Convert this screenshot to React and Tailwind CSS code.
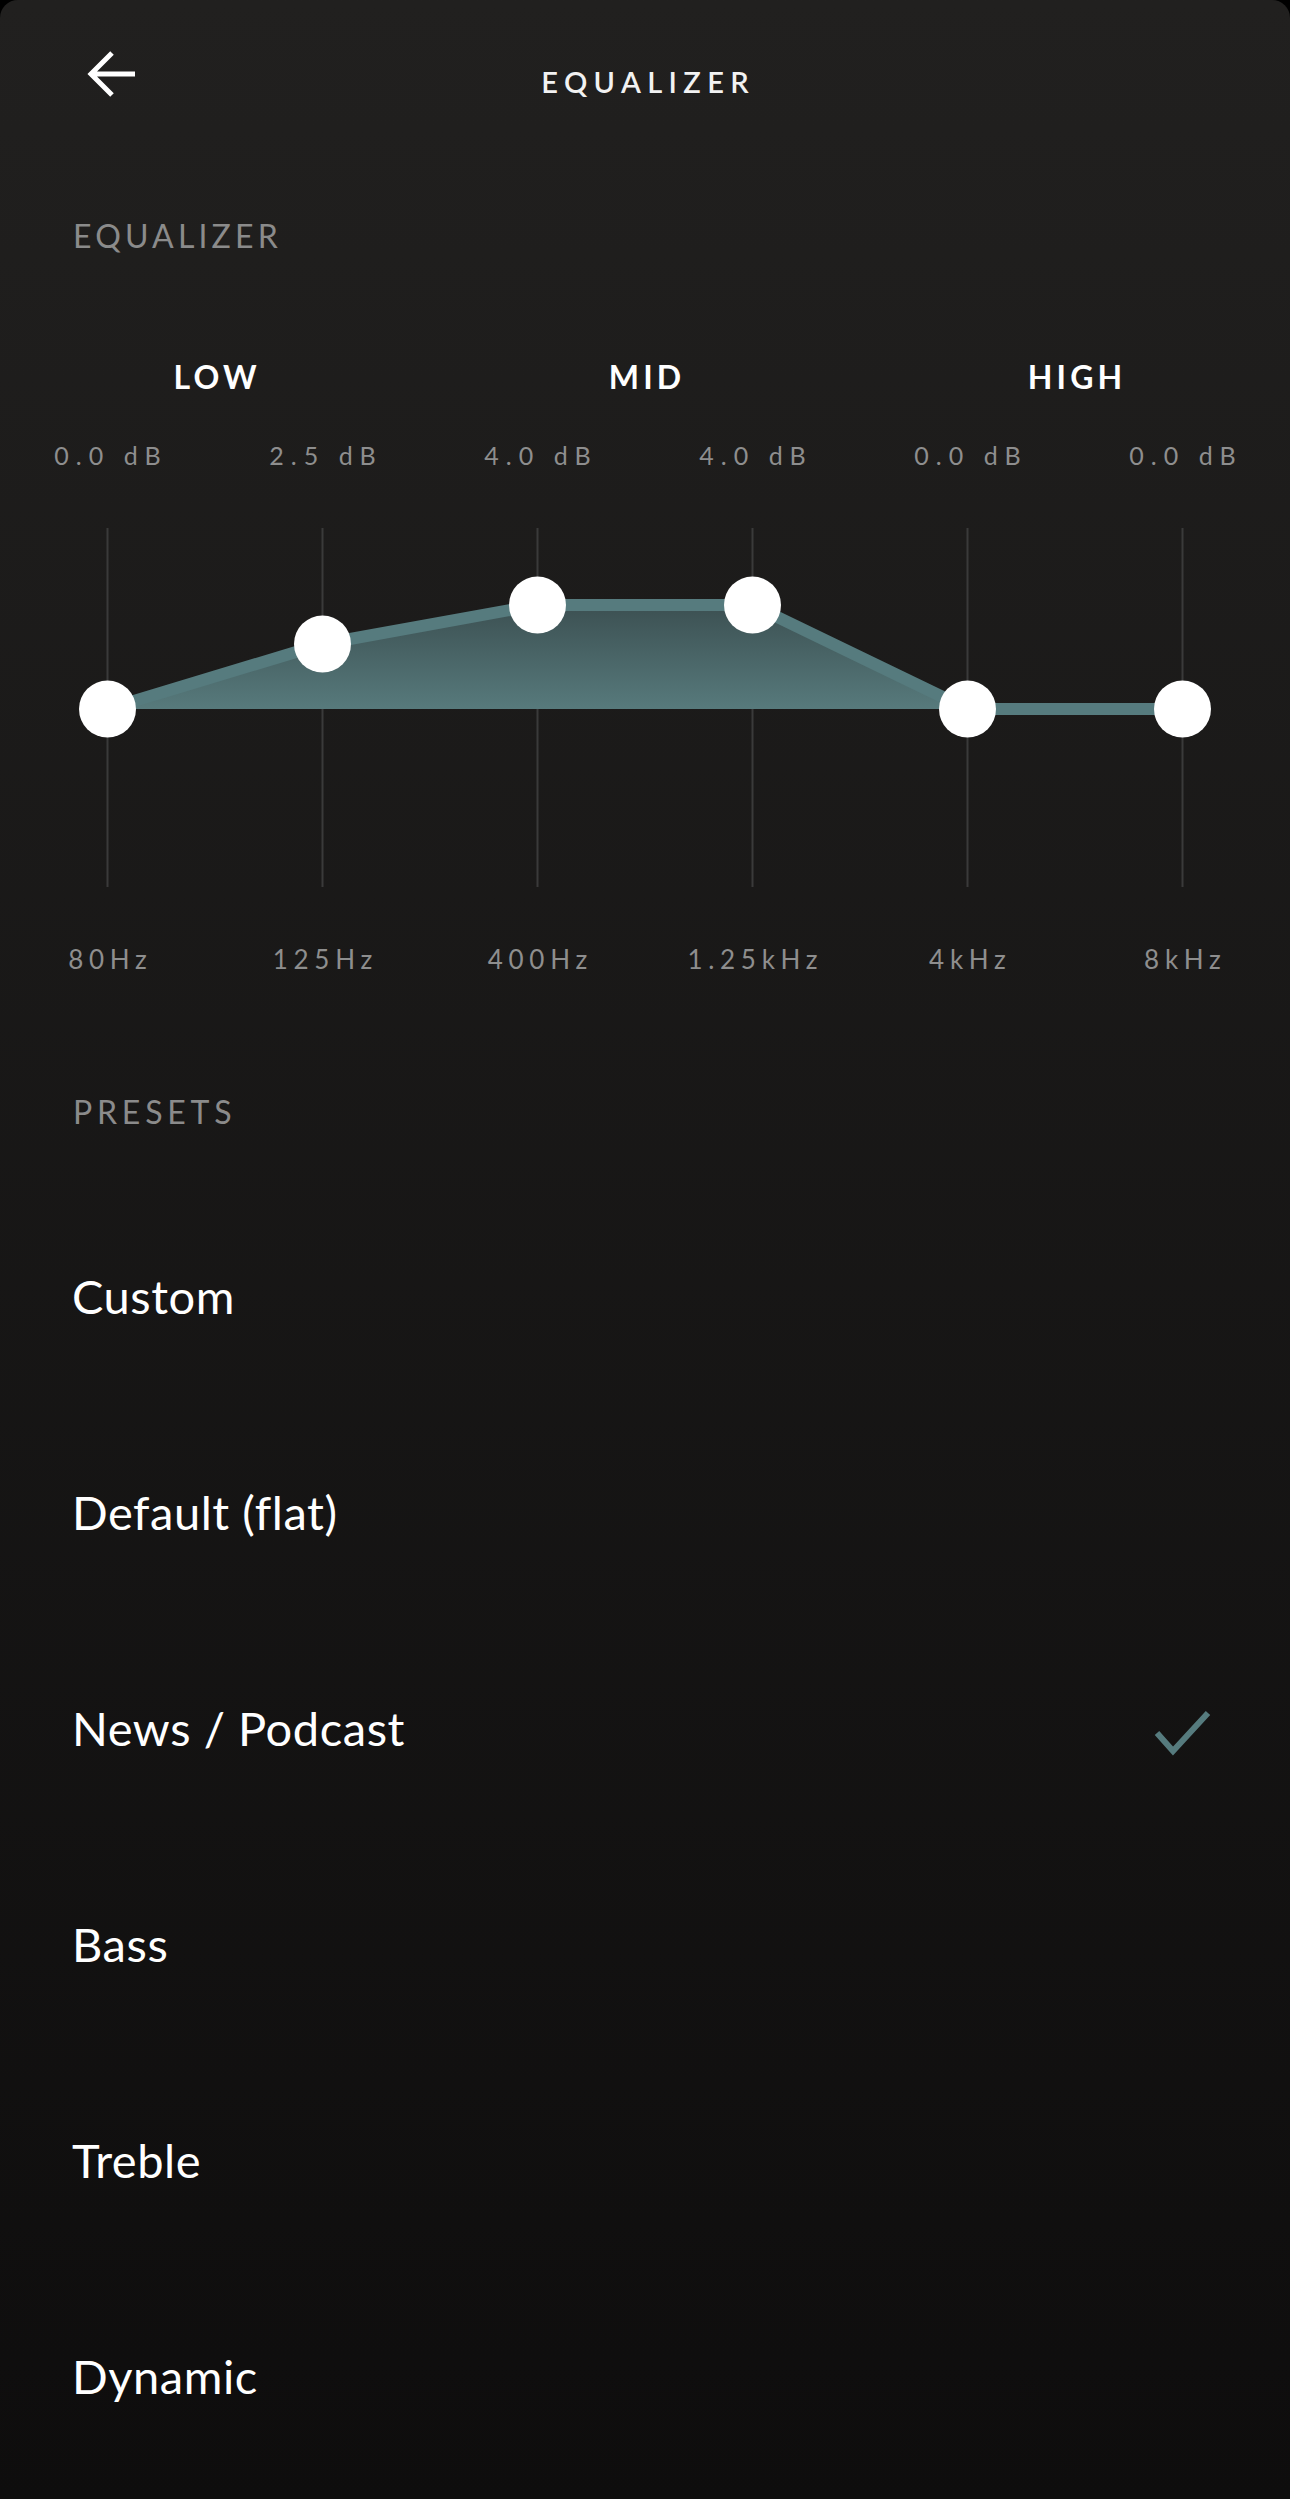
import { useState } from "react";

const bands = [
  { hz: "80Hz", db: 0 },
  { hz: "125Hz", db: 2.5 },
  { hz: "400Hz", db: 4 },
  { hz: "1.25kHz", db: 4 },
  { hz: "4kHz", db: 0 },
  { hz: "8kHz", db: 0 },
];

const presets = ["Custom", "Default (flat)", "News / Podcast", "Bass", "Treble", "Dynamic"];

function EqGraph() {
  // 6 equal columns over the full width, 26px per dB around the 0 line
  const xs = bands.map((_, i) => 107.5 + 215 * i);
  const ys = bands.map((b) => 181 - 26 * b.db);
  const pts = xs.map((x, i) => `${x},${ys[i]}`).join(" ");

  return (
    <svg viewBox="0 0 1290 359" className="block w-full h-[359px]">
      <defs>
        <linearGradient id="eqfill" x1="0" y1="77" x2="0" y2="181" gradientUnits="userSpaceOnUse">
          <stop offset="0" stopColor="#3c5052" />
          <stop offset="1" stopColor="#577a7c" />
        </linearGradient>
      </defs>
      {xs.map((x) => (
        <line key={x} x1={x} y1="0" x2={x} y2="359" stroke="#3a3a3a" strokeWidth="2" />
      ))}
      <polygon points={pts} fill="url(#eqfill)" />
      <polyline points={pts} fill="none" stroke="#567b7e" strokeWidth="12" strokeLinejoin="round" />
      {xs.map((x, i) => (
        <circle key={i} cx={x} cy={ys[i]} r="28.5" fill="#ffffff" />
      ))}
    </svg>
  );
}

export default function App() {
  const [selected, setSelected] = useState("News / Podcast");

  return (
    <div className="bg-black min-h-[2499px] font-['Lato',sans-serif]">
      <div className="min-h-[2499px] rounded-t-[18px] bg-linear-to-b from-[#21201f] to-[#0e0d0d] text-white">
        <div className="h-[120px] grid grid-cols-[1fr_auto_1fr] items-start pt-[51px]">
          <svg viewBox="0 0 48 46" className="w-[48px] h-[46px] ml-[87px]">
            <path d="M48 23H4M25 2L4 23l21 21" fill="none" stroke="#ffffff" strokeWidth="5" />
          </svg>
          <h1 className="mt-[16px] text-[29px] leading-none font-semibold tracking-[0.22em] pl-[0.22em] text-[#f2f2f2]">
            EQUALIZER
          </h1>
          <div />
        </div>

        <p className="mt-[100px] pl-[73px] text-[32px] leading-none tracking-[0.13em] text-[#8b8b8b]">
          EQUALIZER
        </p>

        <div className="mt-[109px] grid grid-cols-3 text-center text-[32px] leading-none font-bold tracking-[0.13em]">
          <span className="pl-[0.13em]">LOW</span>
          <span className="pl-[0.13em]">MID</span>
          <span className="pl-[0.13em]">HIGH</span>
        </div>

        <div className="mt-[50px] grid grid-cols-6 text-center text-[25px] leading-none tracking-[0.28em] text-[#8e8e8e]">
          {bands.map((b, i) => (
            <span key={i} className="pl-[0.28em]">
              {b.db.toFixed(1)} dB
            </span>
          ))}
        </div>

        <div className="mt-[60px]">
          <EqGraph />
        </div>

        <div className="mt-[59px] grid grid-cols-6 text-center text-[26px] leading-none tracking-[0.22em] text-[#8e8e8e]">
          {bands.map((b) => (
            <span key={b.hz} className="pl-[0.22em]">
              {b.hz}
            </span>
          ))}
        </div>

        <p className="mt-[124px] pl-[73px] text-[32px] leading-none tracking-[0.15em] text-[#8b8b8b]">
          PRESETS
        </p>

        <ul className="mt-[60px]">
          {presets.map((p) => (
            <li
              key={p}
              onClick={() => setSelected(p)}
              className="h-[216px] flex items-center justify-between pl-[72px] pr-[76px]"
            >
              <span className="text-[47px] leading-none tracking-[0.012em]">{p}</span>
              {selected === p && (
                <svg viewBox="0 0 64 60" className="w-[64px] h-[60px]">
                  <path d="M7 35l16 18L58 15" fill="none" stroke="#567b7e" strokeWidth="6" />
                </svg>
              )}
            </li>
          ))}
        </ul>
      </div>
    </div>
  );
}
